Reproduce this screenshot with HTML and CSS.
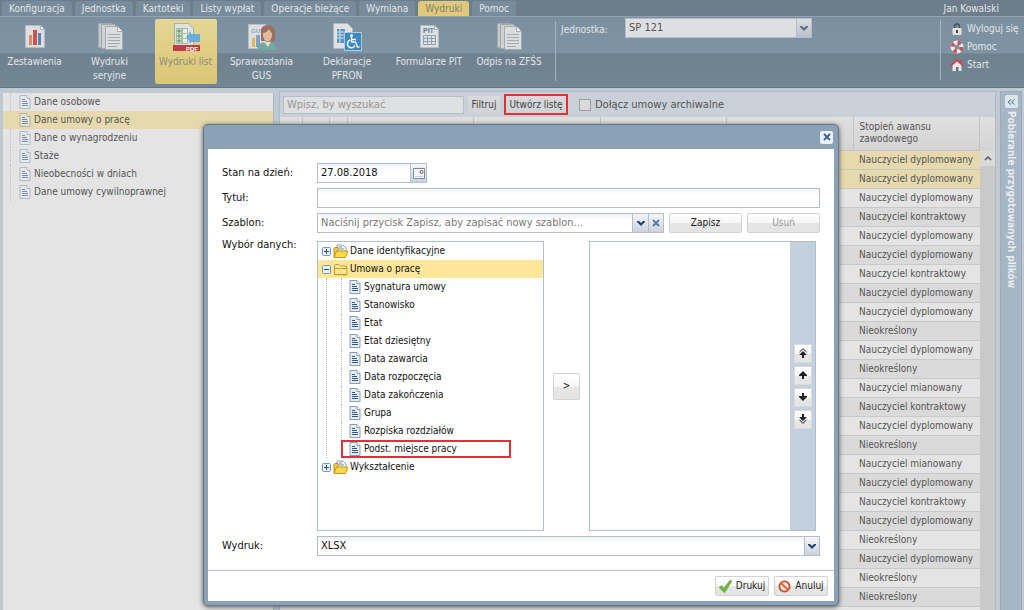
FILE: index.html
```html
<!DOCTYPE html>
<html lang="pl">
<head>
<meta charset="utf-8">
<title>Wydruki list</title>
<link rel="stylesheet" href="styles.css">
</head>
<body>
<svg class="defs" aria-hidden="true">
  <symbol id="doc" viewBox="0 0 12 14"><path d="M1 .5h7l3 3v10H1z" fill="#e4edf5" stroke="#8c9fb1"/><path d="M8 .5v3h3" fill="#fff" stroke="#8c9fb1"/><path d="M3 4.500h3M3 6.500h5M3 8.500h6M3 10.500h6" stroke="#35577c" stroke-width="1.200"/></symbol>
  <symbol id="folder-full" viewBox="0 0 16 15"><path d="M4 7V1h6l3 3v5H4z" fill="#f4f8fc" stroke="#93a5b5"/><path d="M6 3h3M6 5h5" stroke="#6c8fb0"/><path d="M1 13V4.500l1-1h3v4" fill="#f2cf4c" stroke="#b8860b"/><path d="M1 13.500l2.500-6.500h11.500l-2.500 6.500z" fill="#fbd94a" stroke="#c9981c"/></symbol>
  <symbol id="folder" viewBox="0 0 16 15"><path d="M1.500 12.500V4l1-1.500h3.500l1.500 1.500h6v9z" fill="#ffe9a0" stroke="#c39a2c"/><path d="M1.500 12.500V6.500h12.500v6z" fill="#ffe58a" stroke="#c39a2c"/></symbol>
  <symbol id="plus" viewBox="0 0 9 9"><rect x=".5" y=".5" width="8" height="8" rx="1" fill="#e9f1fb" stroke="#7896bb"/><path d="M2 4.500h5M4.500 2v5" stroke="#244c84"/></symbol>
  <symbol id="minus" viewBox="0 0 9 9"><rect x=".5" y=".5" width="8" height="8" rx="1" fill="#e9f1fb" stroke="#7896bb"/><path d="M2 4.500h5" stroke="#244c84"/></symbol>
  <symbol id="chev" viewBox="0 0 8 5"><path d="M0 0h2l2 2 2-2h2v1L4 5 0 1z" fill="currentColor"/></symbol>
  <symbol id="cross" viewBox="0 0 8 8"><path d="M1 1l6 6M7 1L1 7" stroke="currentColor" stroke-width="1.800"/></symbol>
  <symbol id="up" viewBox="0 0 8 8"><path d="M4 0l4 4v1H5v3H3V5H0V4z" fill="#222"/></symbol>
  <symbol id="down" viewBox="0 0 8 8"><path d="M4 8L0 4V3h3V0h2v3h3v1z" fill="#222"/></symbol>
  <symbol id="top" viewBox="0 0 8 10"><path d="M.5 4L4 .7 7.500 4" fill="none" stroke="#222"/><path d="M4 3l3.500 3.500v.5H5v3H3V7H.5v-.5z" fill="#222"/></symbol>
  <symbol id="bottom" viewBox="0 0 8 10"><path d="M.5 6L4 9.300 7.500 6" fill="none" stroke="#222"/><path d="M4 7L.5 3.500V3H3V0h2v3h2.500v.5z" fill="#222"/></symbol>
  <symbol id="pages" viewBox="0 0 28 28"><path d="M2.500.5h13l4 4v20h-17z" fill="#c4c8ca" stroke="#a2a9ad"/><path d="M5.500 1.500h13l4 4v20h-17z" fill="#ced1d3" stroke="#a2a9ad"/><path d="M9.500 3.500h12l5 5v18h-17z" fill="#dadcdd" stroke="#a4abaf"/><path d="M21.500 3.500v5h5" fill="#eee" stroke="#a4aaae"/><path d="M12 11.500h12M12 14.500h12M12 17.500h12M12 20.500h12M12 23.500h9" stroke="#a5acb0"/></symbol>
</svg>

<header class="top">
  <nav class="tabs">
    <button class="tab">Konfiguracja</button><button class="tab">Jednostka</button><button class="tab">Kartoteki</button><button class="tab">Listy wypłat</button><button class="tab">Operacje bieżące</button><button class="tab">Wymiana</button><button class="tab tab-on">Wydruki</button><button class="tab">Pomoc</button>
    <span class="user">Jan Kowalski</span>
  </nav>
  <div class="ribbon">
    <div class="tools">
      <button class="tool"><svg class="tool-icon" viewBox="0 0 28 28"><path d="M4.500 2.500h15l4 4v18h-19z" fill="#dcdedf" stroke="#b4bcc2"/><path d="M19.500 2.500v4h4" fill="#f0f0f0" stroke="#aab2b8"/><path d="M8 12h3v10H8z" fill="#dc8a62"/><path d="M12 7h4v15h-4z" fill="#c9544f"/><path d="M17 10h3v12h-3z" fill="#5e83ad"/></svg>Zestawienia</button>
      <button class="tool"><svg class="tool-icon"><use href="#pages"/></svg>Wydruki seryjne</button>
      <button class="tool tool-on"><svg class="tool-icon" viewBox="0 0 28 28"><path d="M2.500.5h14l5 5v20h-19z" fill="#dfe2df" stroke="#aab0aa"/><path d="M4 5h12v16H4z" fill="#a6bda3"/><path d="M5 6h4v4H5zM11 6h4v4h-4zM5 11h4v4H5zM11 11h4v4h-4zM5 16h4v4H5zM11 16h4v4h-4z" fill="#e8eee7"/><path d="M7 6v4M5 8h4M7 11v4M5 13h4M7 16v4M5 18h4" stroke="#3e8f45"/><path d="M14 14l5-6v3h9v8h-9v2z" fill="#69add8"/><path d="M1 22h27v6H1z" fill="#bd3e46"/><text class="pdf" x="14" y="27.500">PDF</text></svg>Wydruki list</button>
      <button class="tool"><svg class="tool-icon wide" viewBox="0 0 30 28"><path d="M1.500 1.500h17v24h-17z" fill="#dddfe1" stroke="#b8bec3"/><text class="gus" x="4" y="10">GUS</text><path d="M5 15h3v9H5z" fill="#dcb65c"/><path d="M9 12h4v12H9z" fill="#7fa5c5"/><path d="M14 13V8c0-4 3-6 7-6s7 3 7 7v9H14z" fill="#9c705f"/><path d="M10 27c0-6 4-8 10-8s9 2 9 8z" fill="#72aaa1"/><path d="M17 19l4 5 3-5z" fill="#e8d8c8"/><ellipse cx="20.500" cy="12" rx="4.500" ry="6.500" fill="#e2bc9d"/><path d="M15 10c4 0 6-2 7-4 1 2 2 4 4 4-1-6-10-8-11 0" fill="#9c705f"/></svg>Sprawozdania GUS</button>
      <button class="tool"><svg class="tool-icon wide" viewBox="0 0 30 28"><path d="M1.500.5h14l5 5v20h-19z" fill="#dfe1e3" stroke="#b0b8be"/><path d="M5 6h8v14H5z" fill="#5b96c2"/><path d="M8 6v14M5 9h8M5 12h8M5 15h8" stroke="#d5dfe7"/><path d="M12.500 9.500h17v18h-17z" fill="#3d88bd" stroke="#b3cada"/><circle cx="19.500" cy="12.500" r="1.500" fill="#fff"/><path d="M19.500 14v5h4l2 5h2M20 16.500h4M18 17a4 4 0 1 0 5 5.500" fill="none" stroke="#f2f5f8" stroke-width="1.500"/></svg>Deklaracje PFRON</button>
      <button class="tool"><svg class="tool-icon" viewBox="0 0 28 28"><path d="M5.500 2.500h14l4 4v18h-18z" fill="#dddfe0" stroke="#b4bcc2"/><path d="M19.500 2.500v4h4" fill="#f0f0f0" stroke="#aab2b8"/><text class="pit" x="8" y="10">PIT</text><path d="M8.500 12.500h12v9h-12zM8 15.500h13M8 18.500h13M12.500 12v10M16.500 12v10" fill="none" stroke="#93a4b1"/></svg>Formularze PIT</button>
      <button class="tool"><svg class="tool-icon"><use href="#pages"/></svg>Odpis na ZFŚS</button>
    </div>
    <div class="unit">
      <label for="unit">Jednostka:</label>
      <span class="pick pick-dim"><select id="unit"><option>SP 121</option></select><span class="pick-btn"><svg class="chev"><use href="#chev"/></svg></span></span>
    </div>
    <div class="links">
      <a class="link" href="#"><svg class="link-icon" viewBox="0 0 14 14"><path d="M4.500 7V4.500a2.500 2.500 0 0 1 5 0V7" fill="none" stroke="#46525c" stroke-width="1.500"/><rect x="2.500" y="6" width="9" height="7" rx="1" fill="#e4e4de"/><path d="M7 8v3" stroke="#444" stroke-width="2"/></svg>Wyloguj się</a>
      <a class="link" href="#"><svg class="link-icon" viewBox="0 0 14 14"><circle cx="7" cy="7" r="4.500" fill="none" stroke="#eee" stroke-width="4"/><circle cx="7" cy="7" r="4.500" fill="none" stroke="#c9555a" stroke-width="4" stroke-dasharray="3.530 3.530"/></svg>Pomoc</a>
      <a class="link" href="#"><svg class="link-icon" viewBox="0 0 14 14"><path d="M2.500 7L7 3l4.500 4v6h-9z" fill="#e8e8ea"/><path d="M1 7.500L7 2l6 5.500M10.500 1.500V5" fill="none" stroke="#c34a54" stroke-width="1.800"/><path d="M6 9h2.500v4H6z" fill="#66727e"/></svg>Start</a>
    </div>
  </div>
</header>

<main class="main">
  <ul class="side">
    <li class="side-row"><svg class="doc"><use href="#doc"/></svg>Dane osobowe</li>
    <li class="side-row side-on"><svg class="doc"><use href="#doc"/></svg>Dane umowy o pracę</li>
    <li class="side-row"><svg class="doc"><use href="#doc"/></svg>Dane o wynagrodzeniu</li>
    <li class="side-row"><svg class="doc"><use href="#doc"/></svg>Staże</li>
    <li class="side-row"><svg class="doc"><use href="#doc"/></svg>Nieobecności w dniach</li>
    <li class="side-row"><svg class="doc"><use href="#doc"/></svg>Dane umowy cywilnoprawnej</li>
  </ul>

  <section class="panel">
    <div class="bar">
      <input class="search" type="text" placeholder="Wpisz, by wyszukać" aria-label="Wyszukaj">
      <button class="bar-btn">Filtruj</button>
      <button class="bar-btn marked">Utwórz listę</button>
      <label class="check"><input type="checkbox">Dołącz umowy archiwalne</label>
    </div>
    <div class="grid">
      <table class="table">
        <colgroup><col class="c-a"><col class="c-b"><col class="c-c"><col><col><col><col><col></colgroup>
        <thead><tr><th></th><th></th><th></th><th></th><th></th><th></th><th></th><th>Stopień awansu<br>zawodowego</th></tr></thead>
        <tbody>
          <tr class="on"><td colspan="7"></td><td>Nauczyciel dyplomowany</td></tr>
          <tr class="on"><td colspan="7"></td><td>Nauczyciel dyplomowany</td></tr>
          <tr><td colspan="7"></td><td>Nauczyciel dyplomowany</td></tr>
          <tr><td colspan="7"></td><td>Nauczyciel kontraktowy</td></tr>
          <tr><td colspan="7"></td><td>Nauczyciel dyplomowany</td></tr>
          <tr><td colspan="7"></td><td>Nauczyciel dyplomowany</td></tr>
          <tr><td colspan="7"></td><td>Nauczyciel kontraktowy</td></tr>
          <tr><td colspan="7"></td><td>Nauczyciel dyplomowany</td></tr>
          <tr><td colspan="7"></td><td>Nauczyciel dyplomowany</td></tr>
          <tr><td colspan="7"></td><td>Nieokreślony</td></tr>
          <tr><td colspan="7"></td><td>Nauczyciel dyplomowany</td></tr>
          <tr><td colspan="7"></td><td>Nieokreślony</td></tr>
          <tr><td colspan="7"></td><td>Nauczyciel mianowany</td></tr>
          <tr><td colspan="7"></td><td>Nauczyciel kontraktowy</td></tr>
          <tr><td colspan="7"></td><td>Nauczyciel dyplomowany</td></tr>
          <tr><td colspan="7"></td><td>Nieokreślony</td></tr>
          <tr><td colspan="7"></td><td>Nauczyciel mianowany</td></tr>
          <tr><td colspan="7"></td><td>Nauczyciel dyplomowany</td></tr>
          <tr><td colspan="7"></td><td>Nauczyciel kontraktowy</td></tr>
          <tr><td colspan="7"></td><td>Nauczyciel dyplomowany</td></tr>
          <tr><td colspan="7"></td><td>Nieokreślony</td></tr>
          <tr><td colspan="7"></td><td>Nauczyciel dyplomowany</td></tr>
          <tr><td colspan="7"></td><td>Nieokreślony</td></tr>
          <tr><td colspan="7"></td><td>Nieokreślony</td></tr>
        </tbody>
      </table>
      <div class="scroll"><div class="scroll-head"></div><button class="scroll-up" aria-label="Przewiń w górę"><svg class="caret" viewBox="0 0 8 5"><path d="M1 4.500l3-3 3 3" fill="none" stroke="#555" stroke-width="1.500"/></svg></button></div>
    </div>
  </section>

  <aside class="strip">
    <button class="strip-btn" aria-label="Rozwiń"><svg class="caret" viewBox="0 0 8 6"><path d="M4 .5L1 3l3 2.500M7.500.5l-3 2.500 3 2.500" fill="none" stroke="#496d92"/></svg></button>
    <span class="strip-text">Pobieranie przygotowanych plików</span>
  </aside>
</main>

<div class="dialog" role="dialog" aria-label="Tworzenie listy">
  <div class="title"><button class="close" aria-label="Zamknij"><svg class="x"><use href="#cross"/></svg></button></div>
  <form class="form">
    <label for="day">Stan na dzień:</label>
    <div class="field date"><input id="day" type="text" value="27.08.2018"><button type="button" class="trig" aria-label="Kalendarz"><svg class="cal" viewBox="0 0 12 11"><path d="M.5.500h11v10H.5z" fill="#f5f8fb" stroke="#7b88a5"/><path d="M2 8.500h8" stroke="#c7d0dd"/><circle cx="8.500" cy="4" r="1.500" fill="#fff" stroke="#8a3f4c"/></svg></button></div>

    <label for="name">Tytuł:</label>
    <div class="field"><input id="name" type="text"></div>

    <label for="template">Szablon:</label>
    <div class="row">
      <div class="field"><input id="template" type="text" placeholder="Naciśnij przycisk Zapisz, aby zapisać nowy szablon..."><button type="button" class="trig" aria-label="Rozwiń listę"><svg class="chev"><use href="#chev"/></svg></button><button type="button" class="trig clear" aria-label="Wyczyść"><svg class="x"><use href="#cross"/></svg></button></div>
      <button type="button" class="btn">Zapisz</button>
      <button type="button" class="btn" disabled>Usuń</button>
    </div>

    <span class="data-label">Wybór danych:</span>
    <div class="picker">
      <ul class="tree">
        <li class="node"><svg class="exp"><use href="#plus"/></svg><svg class="fold"><use href="#folder-full"/></svg>Dane identyfikacyjne</li>
        <li class="node node-on"><svg class="exp"><use href="#minus"/></svg><svg class="fold"><use href="#folder"/></svg>Umowa o pracę</li>
        <li class="kids">
          <ul>
            <li class="leaf"><svg class="doc"><use href="#doc"/></svg>Sygnatura umowy</li>
            <li class="leaf"><svg class="doc"><use href="#doc"/></svg>Stanowisko</li>
            <li class="leaf"><svg class="doc"><use href="#doc"/></svg>Etat</li>
            <li class="leaf"><svg class="doc"><use href="#doc"/></svg>Etat dziesiętny</li>
            <li class="leaf"><svg class="doc"><use href="#doc"/></svg>Data zawarcia</li>
            <li class="leaf"><svg class="doc"><use href="#doc"/></svg>Data rozpoczęcia</li>
            <li class="leaf"><svg class="doc"><use href="#doc"/></svg>Data zakończenia</li>
            <li class="leaf"><svg class="doc"><use href="#doc"/></svg>Grupa</li>
            <li class="leaf"><svg class="doc"><use href="#doc"/></svg>Rozpiska rozdziałów</li>
            <li class="leaf marked"><svg class="doc"><use href="#doc"/></svg>Podst. miejsce pracy</li>
          </ul>
        </li>
        <li class="node"><svg class="exp"><use href="#plus"/></svg><svg class="fold"><use href="#folder-full"/></svg>Wykształcenie</li>
      </ul>
      <button type="button" class="btn move">&gt;</button>
      <div class="chosen">
        <div class="order">
          <button type="button" class="ord" aria-label="Na początek"><svg class="far"><use href="#top"/></svg></button>
          <button type="button" class="ord" aria-label="W górę"><svg class="x"><use href="#up"/></svg></button>
          <button type="button" class="ord" aria-label="W dół"><svg class="x"><use href="#down"/></svg></button>
          <button type="button" class="ord" aria-label="Na koniec"><svg class="far"><use href="#bottom"/></svg></button>
        </div>
      </div>
    </div>

    <label for="format">Wydruk:</label>
    <span class="pick"><select id="format"><option>XLSX</option></select><span class="pick-btn"><svg class="chev"><use href="#chev"/></svg></span></span>
  </form>
  <footer class="foot">
    <button class="btn act"><svg class="act-icon" viewBox="0 0 14 14"><path d="M0 8l3-2 2 3 7-9 2 1-8 13z" fill="#74b444" stroke="#5a9a32" stroke-width=".5"/></svg>Drukuj</button>
    <button class="btn act"><svg class="act-icon" viewBox="0 0 14 14"><circle cx="7" cy="7" r="5.500" fill="#f3ebe6" stroke="#c2512f" stroke-width="2"/><path d="M3 3l8 8" stroke="#e07038" stroke-width="2.500"/></svg>Anuluj</button>
  </footer>
</div>
</body>
</html>
```
FILE: styles.css
```css
* { box-sizing: border-box; }
body {
  margin: 0;
  height: 100vh;
  overflow: hidden;
  display: flex;
  flex-direction: column;
  position: relative;
  background: #bfc9d2;
  color: #555;
  font: 10px/14px "DejaVu Sans Condensed", "Noto Sans", sans-serif;
}
button, input, select { font: inherit; color: inherit; margin: 0; padding: 0; border: 0; border-radius: 0; }
button { background: none; white-space: nowrap; }
ul { list-style: none; margin: 0; padding: 0; }
svg { display: block; flex: none; }
.defs { position: absolute; width: 0; height: 0; }

/* header */
.tabs { display: flex; gap: 3px; height: 17px; padding: 1px 2px 0; background: #6e7d8b; border-bottom: 1px solid #92a4b2; color: #e2e6e9; }
.tab { padding: 0 7px; background: #778b9b; border-radius: 3px 3px 0 0; }
.tab-on { background: #dfca7c; color: #82806f; }
.user { margin: 0 23px 0 auto; line-height: 16px; }
.ribbon { display: flex; height: 71px; padding-top: 2px; background: linear-gradient(#7b8fa0, #7e93a3 36px, #6f818f 37px, #738694); border-bottom: 1px solid #667582; color: #e2e6e9; }
.tools { display: grid; grid-template-columns: 69px 81px 71px 81px 90px 74px 86px; justify-items: center; padding-right: 3px; }
.tool { display: flex; flex-direction: column; align-items: center; width: 62px; height: 65px; padding-top: 4px; white-space: normal; border-radius: 2px; }
.tool:nth-child(n+4) { width: 76px; }
.tool:nth-child(n+6) { white-space: nowrap; }
.tool-on { background: linear-gradient(#e3d697, #e0cf83 50%, #dac575); color: #8c8b7b; }
.tool-icon { width: 28px; height: 28px; margin-bottom: 4px; }
.wide { width: 30px; }
.pdf { font: bold 6px "Liberation Sans", sans-serif; fill: #fff; }
.gus { font: bold 6px "Liberation Sans", sans-serif; fill: #8aa6c0; }
.pit { font: bold 7px "Liberation Sans", sans-serif; fill: #5e82a4; }
.unit { flex: 1; display: flex; align-items: flex-start; height: 60px; margin-top: 2px; padding-left: 5px; border-left: 1px solid #a4b2be; }
.unit label { width: 64px; line-height: 18px; }
.unit .pick { width: 187px; margin-top: -3px; }
.links { width: 84px; height: 60px; margin-top: 1px; padding-left: 9px; border-left: 1px solid #a4b2be; }
.link { display: flex; align-items: center; gap: 3px; height: 18px; color: inherit; text-decoration: none; white-space: nowrap; }
.link-icon { width: 14px; height: 14px; }

/* drop-down */
.pick { display: flex; height: 20px; border: 1px solid #b5bccb; background: linear-gradient(#f0f2f5, #fff 6px); color: #111; font-size: 11px; }
.pick select { flex: 1; appearance: none; background: none; padding-left: 3px; }
.pick-btn { display: grid; place-items: center; width: 15px; border-left: 1px solid #b5bccb; background: linear-gradient(#f5f6f8, #ccd2dd); color: #24446c; pointer-events: none; }
.pick-dim { background: #dedfe1; color: #555; }
.pick-dim .pick-btn { background: linear-gradient(#dcdee0, #b9c0c9); color: #5e6e80; }
.chev { width: 8px; height: 5px; }
.x { width: 8px; height: 8px; }

/* main area */
.main { flex: 1; min-height: 0; display: flex; padding: 3px 2px 0 3px; }
.side { width: 271px; margin-top: 2px; background: #e4e4e4; border-right: 1px solid #aebac6; }
.side-row { display: flex; align-items: center; gap: 3px; height: 18px; margin-left: 7px; padding-left: 8px; border-left: 1px dotted #c4c4c4; }
.side-row .doc { opacity: .6; }
.side-on { margin-left: 0; padding-left: 16px; border: 0; background: #e6d9ae; }
.doc { width: 12px; height: 14px; }
.panel { flex: 1; min-width: 0; display: flex; flex-direction: column; margin-left: 5px; border: 1px solid #b1bbc8; border-bottom: 0; }
.bar { display: flex; align-items: center; gap: 4px; height: 25px; padding-left: 3px; background: #c9d0d8; }
.search { width: 181px; height: 18px; padding: 0 3px; border: 1px solid #b6bec7; background: #dfe0e1; font-size: 11px; }
.search::placeholder { color: #969696; opacity: 1; }
.bar-btn { height: 18px; padding: 0 2px; min-width: 32px; background: linear-gradient(#d9dadc, #d0d2d5); color: #444; }
.marked { border: 2px solid #e03038; }
.bar-btn.marked { min-width: 64px; height: 21px; }
.check { display: flex; align-items: center; gap: 4px; margin-left: 7px; font-size: 11px; }
.check input { appearance: none; width: 12px; height: 12px; border: 1px solid #999fa6; background: #d8dadc; }
.grid { flex: 1; min-height: 0; display: flex; overflow: hidden; background: #e4e4e4; }
.table { flex: 1; width: 100%; table-layout: fixed; border-collapse: collapse; align-self: flex-start; }
.c-a { width: 22px; }
.c-b { width: 27px; }
.c-c { width: 18px; }
th { height: 33px; padding: 0 6px; font-weight: normal; line-height: 12px; text-align: left; background: linear-gradient(#dfdfe0, #d4d4d5); border: 1px solid #c1c4c8; border-width: 0 1px 1px 0; }
td { height: 19px; padding: 0 6px; line-height: 16px; white-space: nowrap; border-bottom: 1px solid #c9c9c9; }
tbody tr:nth-child(even) { background: #dadada; }
tbody .on, tbody .on:nth-child(even) { background: #e6d9ae; }
.scroll { width: 15px; background: #c9c9c9; }
.scroll-head { height: 33px; background: linear-gradient(#dfdfe0, #d4d4d5); }
.scroll-up { display: grid; place-items: center; width: 15px; height: 16px; background: #dadada; }
.caret { width: 8px; height: 6px; }
.strip { display: flex; flex-direction: column; align-items: center; width: 22px; margin-left: 4px; padding-top: 3px; background: #a7b6c5; border: 1px solid #9aabbc; border-bottom: 0; }
.strip-btn { display: grid; place-items: center; width: 13px; height: 13px; margin-bottom: 3px; background: #dbe5ec; border-radius: 2px; }
.strip-text { writing-mode: vertical-rl; font-weight: bold; color: #e9edf0; white-space: nowrap; }

/* dialog window */
.dialog { position: absolute; left: 203px; right: 185px; top: 124px; padding: 0 4px 4px; border: 1px solid #65788c; border-radius: 5px; background: #8aa1b6; color: #111; box-shadow: 0 1px 5px #555; }
.title { display: flex; justify-content: flex-end; align-items: center; height: 24px; padding: 0 1px; }
.close { display: grid; place-items: center; width: 13px; height: 13px; background: #e8f0fa; border-radius: 2px; color: #3b5c8c; }
.form { display: grid; grid-template-columns: 95px minmax(0, 1fr); gap: 5px 0; align-items: center; padding: 14px; background: #fff; font-size: 11px; }
.field { flex: 1; display: flex; height: 20px; border: 1px solid #b5bccb; background: linear-gradient(#f0f2f5, #fff 6px); }
.field input { flex: 1; min-width: 0; background: none; padding: 0 3px; }
.field input::placeholder { color: #777; opacity: 1; }
.date { width: 110px; }
.trig { display: grid; place-items: center; width: 16px; border-left: 1px solid #b5bccb; background: linear-gradient(#f5f6f8, #ccd2dd); color: #24446c; }
.clear { width: 15px; color: #4c7ba8; }
.cal { width: 12px; height: 11px; }
.row { display: flex; gap: 5px; }
.btn { width: 73px; height: 20px; border: 1px solid #d2d2d2; border-radius: 2px; background: linear-gradient(#fff, #f6f6f6 50%, #e6e6e6 51%, #e4e4e4); color: #222; font-size: 10px; }
.btn:disabled { color: #999; }
.data-label { align-self: start; }
.picker { display: flex; align-items: center; gap: 9px; height: 290px; margin: 3px 4px 0 0; }
.tree, .chosen { flex: 1; height: 100%; border: 1px solid #aebfd2; background: #fff; }
.tree { font-size: 10px; }
.node { display: flex; align-items: center; gap: 1px; height: 18px; padding-left: 4px; }
.node-on { background: #ffe698; }
.exp { width: 9px; height: 9px; margin-right: 1px; }
.fold { width: 16px; height: 15px; }
.kids { margin-left: 8px; padding-left: 14px; border-left: 1px dotted #bbb; }
.leaf { display: flex; align-items: center; gap: 3px; width: 170px; height: 18px; padding-left: 7px; border-left: 1px dotted #bbb; }
.leaf.marked { padding-left: 6px; border: 2px solid #e03038; }
.move { width: 27px; height: 27px; }
.chosen { display: flex; justify-content: flex-end; }
.order { display: flex; flex-direction: column; justify-content: center; align-items: center; gap: 3px; width: 25px; background: #c3d1de; }
.ord { display: grid; place-items: center; width: 18px; height: 19px; border: 1px solid #dadada; background: linear-gradient(#fff, #f6f6f6 50%, #e6e6e6 51%, #e4e4e4); }
.far { width: 8px; height: 10px; }
.foot { display: flex; justify-content: flex-end; gap: 5px; padding: 5px 6px; border-top: 1px solid #b5bdd2; background: #fff; }
.act { display: flex; align-items: center; justify-content: center; gap: 4px; width: 54px; }
.act-icon { width: 13px; height: 13px; }
```
